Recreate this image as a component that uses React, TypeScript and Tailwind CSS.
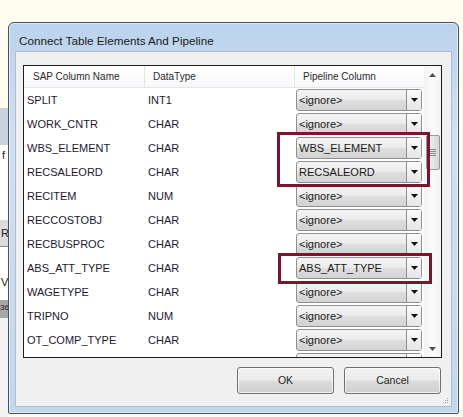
import React from "react";

const rows: [string, string, string][] = [
  ["SPLIT", "INT1", "<ignore>"],
  ["WORK_CNTR", "CHAR", "<ignore>"],
  ["WBS_ELEMENT", "CHAR", "WBS_ELEMENT"],
  ["RECSALEORD", "CHAR", "RECSALEORD"],
  ["RECITEM", "NUM", "<ignore>"],
  ["RECCOSTOBJ", "CHAR", "<ignore>"],
  ["RECBUSPROC", "CHAR", "<ignore>"],
  ["ABS_ATT_TYPE", "CHAR", "ABS_ATT_TYPE"],
  ["WAGETYPE", "CHAR", "<ignore>"],
  ["TRIPNO", "NUM", "<ignore>"],
  ["OT_COMP_TYPE", "CHAR", "<ignore>"],
  ["", "", ""],
];

function Combo({ value }: { value: string }) {
  return (
    <div className="flex h-[22px] w-[126px] shrink-0 items-stretch rounded-[3px] border border-[#8e8f8f] bg-[linear-gradient(180deg,#f4f4f4_0%,#ececec_45%,#dedede_55%,#d2d2d2_100%)]">
      <div className="flex flex-1 items-center pl-[2px] text-[11px] text-[#1a1a1a] leading-none">{value}</div>
      <div className="flex w-[15px] items-center justify-center border-l border-[#8e8f8f] bg-[linear-gradient(180deg,#fbfbfb,#e6e6e6)]">
        <svg width="7" height="4" viewBox="0 0 7 4">
          <path d="M0 0H7L3.5 4Z" fill="#111" />
        </svg>
      </div>
    </div>
  );
}

function Button({ label }: { label: string }) {
  return (
    <div className="flex h-[27px] w-[97px] items-center justify-center rounded-[3px] border border-[#707070] bg-[linear-gradient(180deg,#f2f2f2_0%,#ebebeb_48%,#dddddd_52%,#cfcfcf_100%)] text-[10.5px] text-[#1e1e1e] shadow-[inset_0_0_0_1px_rgba(255,255,255,0.7)]">
      {label}
    </div>
  );
}

export default function App() {
  return (
    <div
      className="relative flex h-[417px] w-[463px] flex-col overflow-hidden bg-[#fdfcee]"
      style={{ fontFamily: '"Liberation Sans", Arial, sans-serif' }}
    >
      <div className="h-[22px] shrink-0" />
      <div className="flex shrink-0">
        {/* background windows strip */}
        <div className="flex h-[395px] w-[8px] shrink-0 flex-col overflow-hidden text-[11px] leading-none text-[#222]">
          <div className="h-[86px] bg-[#fdfcee]" />
          <div className="h-[37px] bg-[#c9d3df]" />
          <div className="h-[75px] bg-white pl-[2px] pt-[5px]">f</div>
          <div className="h-[26px] bg-[#dcdcdc] pl-[1px] pt-[8px]">R</div>
          <div className="h-[54px] border-t border-[#888] bg-white pl-[1px] pt-[30px]">V</div>
          <div className="h-[18px] bg-[#a8a8a8] pt-[4px] text-[8px]">36</div>
          <div className="flex-1 bg-[#f4f4f4]" />
        </div>

        {/* dialog */}
        <div className="flex h-[392px] w-[451px] shrink-0 flex-col rounded-t-[6px] rounded-b-[2px] border border-[#44505e] bg-[linear-gradient(180deg,#bcd3ed_0%,#cfe0f2_30%,#c3d7ed_100%)] shadow-[inset_0_0_0_1px_rgba(255,255,255,0.55)]">
          <div className="flex h-[28px] shrink-0 items-center pl-[10px] pt-[8px] text-[11.7px] text-[#1b1b1b]">
            Connect Table Elements And Pipeline
          </div>
          <div className="mx-[6px] flex h-[356px] flex-col border border-[#aebfd3] bg-[#f0f0f0]">
            {/* list view */}
            <div className="ml-[7px] mt-[13px] flex h-[293px] w-[419px] border border-[#1e1e1e] bg-white">
              <div className="flex w-[400px] flex-col">
                <div className="flex h-[22px] shrink-0 border-b border-[#e5e5e5] bg-[linear-gradient(180deg,#ffffff,#f7f8fa)] text-[10px] text-[#2a2a2a]">
                  <div className="flex w-[121px] items-center border-r border-[#e3e3e3] pl-[9px]">SAP Column Name</div>
                  <div className="flex w-[150px] items-center border-r border-[#e3e3e3] pl-[8px]">DataType</div>
                  <div className="flex w-[129px] items-center pl-[8px]">Pipeline Column</div>
                </div>
                <div className="flex h-[269px] flex-col overflow-hidden">
                  {rows.map((r, i) => (
                    <div key={i} className="flex h-[24px] shrink-0 items-center text-[11px] text-[#1c1830]">
                      <div className="w-[121px] pl-[3px]">{r[0]}</div>
                      <div className="w-[150px] pl-[3px]">{r[1]}</div>
                      <div className="w-[129px] pl-[1px]">
                        <Combo value={r[2]} />
                      </div>
                    </div>
                  ))}
                </div>
              </div>
              {/* scrollbar */}
              <div className="flex w-[17px] flex-col bg-[linear-gradient(90deg,#f3f3f3,#fafafa_50%,#f3f3f3)]">
                <div className="flex h-[17px] items-center justify-center">
                  <svg width="7" height="4" viewBox="0 0 7 4">
                    <path d="M0 4H7L3.5 0Z" fill="#505050" />
                  </svg>
                </div>
                <div className="flex flex-1 flex-col items-center">
                  <div className="mt-[52px] flex h-[35px] w-[14px] items-center justify-center rounded-[2px] border border-[#999] bg-[linear-gradient(90deg,#f6f6f6,#e6e6e6_50%,#d6d6d6)]">
                    <div className="flex flex-col gap-[1px]">
                      <div className="h-[1px] w-[6px] bg-[#8a8a8a]" />
                      <div className="h-[1px] w-[6px] bg-[#8a8a8a]" />
                      <div className="h-[1px] w-[6px] bg-[#8a8a8a]" />
                      <div className="h-[1px] w-[6px] bg-[#8a8a8a]" />
                    </div>
                  </div>
                </div>
                <div className="flex h-[17px] items-center justify-center">
                  <svg width="7" height="4" viewBox="0 0 7 4">
                    <path d="M0 0H7L3.5 4Z" fill="#505050" />
                  </svg>
                </div>
              </div>
            </div>
            {/* buttons */}
            <div className="mt-[9px] flex justify-end gap-[10px] pr-[10px]">
              <Button label="OK" />
              <Button label="Cancel" />
            </div>
            <div className="flex flex-1 items-end justify-end pb-[2px] pr-[2px]">
              <svg width="7" height="7" viewBox="0 0 7 7">
                <rect x="5" y="1" width="1" height="1" fill="#a0a0a0" />
                <rect x="3" y="3" width="1" height="1" fill="#a0a0a0" />
                <rect x="5" y="3" width="1" height="1" fill="#a0a0a0" />
                <rect x="1" y="5" width="1" height="1" fill="#a0a0a0" />
                <rect x="3" y="5" width="1" height="1" fill="#a0a0a0" />
                <rect x="5" y="5" width="1" height="1" fill="#a0a0a0" />
              </svg>
            </div>
          </div>
        </div>
        <div className="h-[395px] w-[4px] shrink-0 bg-[#fdfcee]" />
      </div>

      {/* annotation boxes */}
      <div className="absolute left-[277px] top-[132px] h-[55px] w-[153px] border-[3px] border-[#7a1530]" />
      <div className="absolute left-[278px] top-[253px] h-[31px] w-[154px] border-[3px] border-[#7a1530]" />
    </div>
  );
}
